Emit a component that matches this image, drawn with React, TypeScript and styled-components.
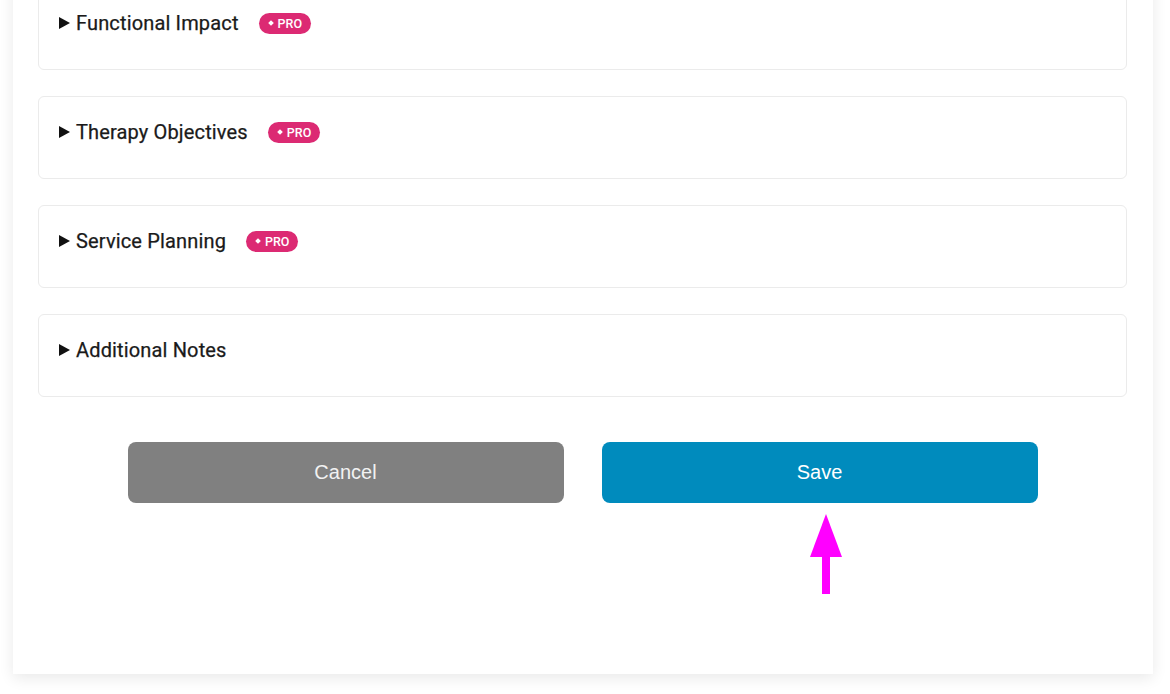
import styled, { createGlobalStyle } from "styled-components";

const GlobalStyle = createGlobalStyle`
  html, body {
    margin: 0;
    padding: 0;
    background: #ffffff;
    overflow: hidden;
  }
  body {
    font-family: Roboto, "Liberation Sans", sans-serif;
  }
`;

const Page = styled.div`
  width: 1170px;
  height: 694px;
  box-sizing: border-box;
  padding: 0 17px 0 13px;
  position: relative;
  overflow: hidden;
`;

const Panel = styled.div`
  margin-top: -40px;
  background: #ffffff;
  box-shadow: 0 4px 14px rgba(0, 0, 0, 0.09);
  padding: 27px 26px 171px 25px;
  display: flex;
  flex-direction: column;
`;

const SectionList = styled.div`
  display: flex;
  flex-direction: column;
  gap: 26px;
`;

const Section = styled.div`
  border: 1px solid #ebebeb;
  border-radius: 6px;
  height: 83px;
  box-sizing: border-box;
  padding: 24px 21px 0 20px;
`;

const Summary = styled.div`
  display: flex;
  align-items: center;
  height: 22px;
  cursor: pointer;
`;

const Caret = styled.span`
  width: 0;
  height: 0;
  border-top: 6px solid transparent;
  border-bottom: 6px solid transparent;
  border-left: 11px solid #111111;
  margin-right: 6px;
`;

const Title = styled.span`
  font-family: Roboto, "Liberation Sans", sans-serif;
  font-size: 20px;
  font-weight: 400;
  color: #1a1a1a;
  letter-spacing: 0.15px;
  -webkit-text-stroke: 0.25px #1a1a1a;
`;

const ProBadge = styled.span`
  margin-left: 20px;
  height: 21px;
  padding: 0 9px 0 10px;
  border-radius: 11px;
  background: #dc2a73;
  color: #ffffff;
  display: inline-flex;
  align-items: center;
  gap: 5px;
  font-family: Roboto, "Liberation Sans", sans-serif;
  font-size: 12.5px;
  font-weight: 500;
`;

const Diamond = styled.span`
  width: 4px;
  height: 4px;
  background: #ffffff;
  transform: rotate(45deg);
`;

const ButtonRow = styled.div`
  margin-top: 45px;
  display: flex;
  justify-content: center;
  gap: 38px;
`;

const ActionButton = styled.button<{ $variant: "cancel" | "save" }>`
  width: 436px;
  height: 61px;
  border: none;
  border-radius: 8px;
  background: ${(p) => (p.$variant === "save" ? "#008bbd" : "#808080")};
  color: ${(p) => (p.$variant === "save" ? "#ffffff" : "#f2f2f2")};
  font-family: "Liberation Sans", Arial, sans-serif;
  font-size: 20px;
  cursor: pointer;
`;

const Pointer = styled.svg`
  position: absolute;
  left: 810px;
  top: 514px;
`;

const sections = [
  { title: "Functional Impact", pro: true },
  { title: "Therapy Objectives", pro: true },
  { title: "Service Planning", pro: true },
  { title: "Additional Notes", pro: false },
];

export default function App() {
  return (
    <>
      <GlobalStyle />
      <Page>
        <Panel>
          <SectionList>
            {sections.map((s) => (
              <Section key={s.title}>
                <Summary>
                  <Caret />
                  <Title>{s.title}</Title>
                  {s.pro && (
                    <ProBadge>
                      <Diamond />
                      PRO
                    </ProBadge>
                  )}
                </Summary>
              </Section>
            ))}
          </SectionList>
          <ButtonRow>
            <ActionButton $variant="cancel">Cancel</ActionButton>
            <ActionButton $variant="save">Save</ActionButton>
          </ButtonRow>
        </Panel>
        <Pointer width="32" height="80" viewBox="0 0 32 80">
          <polygon points="16,0 32,43 0,43" fill="#ff00ff" />
          <rect x="12" y="42" width="8" height="38" fill="#ff00ff" />
        </Pointer>
      </Page>
    </>
  );
}
